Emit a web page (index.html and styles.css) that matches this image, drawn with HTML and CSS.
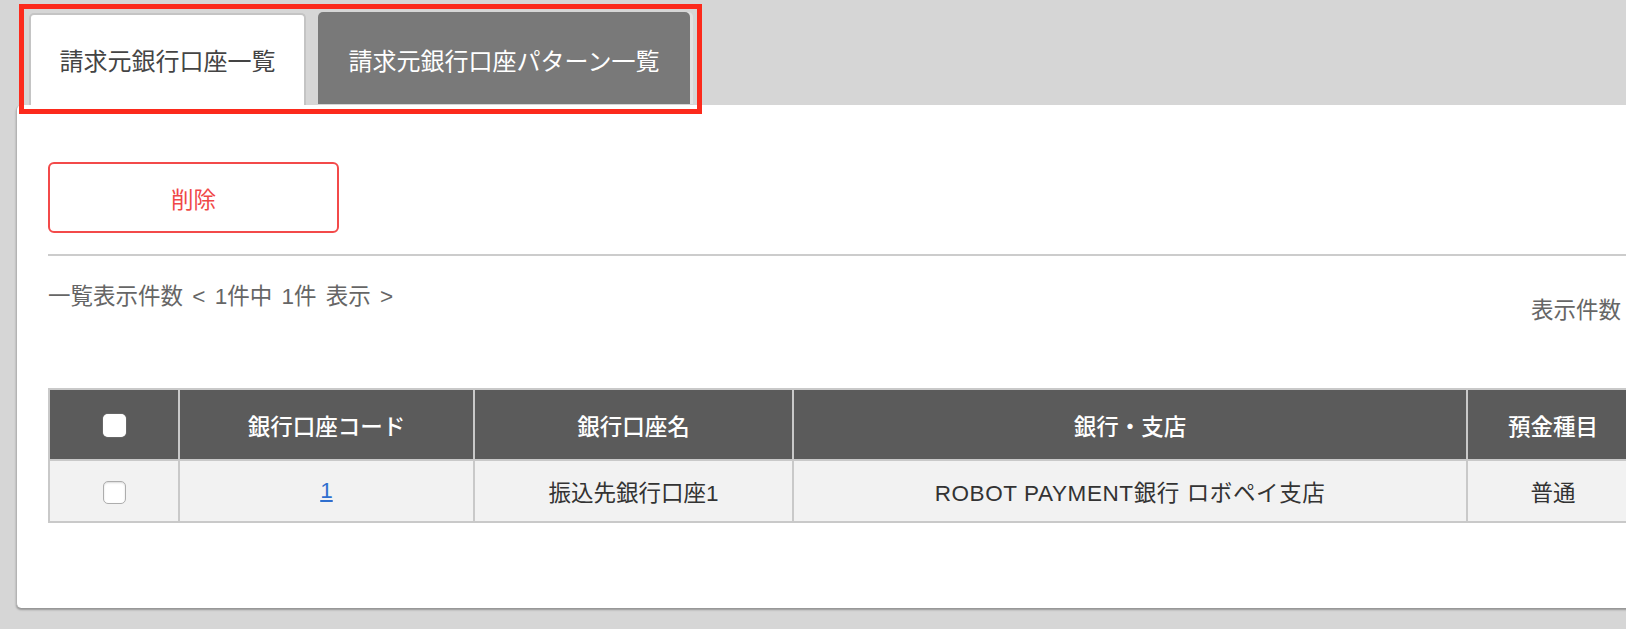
FILE: index.html
```html
<!DOCTYPE html>
<html lang="ja">
<head>
<meta charset="utf-8">
<title>請求元銀行口座一覧</title>
<link rel="stylesheet" href="styles.css">
</head>
<body>
<div class="page">
  <div class="tabs">
    <div class="tab tab-active">請求元銀行口座一覧</div>
    <div class="tab tab-inactive">請求元銀行口座パターン一覧</div>
  </div>
  <div class="panel">
    <button class="btn-delete" type="button">削除</button>
    <div class="divider"></div>
    <div class="info-row">
      <div class="info-left">一覧表示件数 &lt; 1件中 1件 表示 &gt;</div>
      <div class="info-right">
        <span class="info-label">表示件数</span>
        <span class="select-box">50件</span>
      </div>
    </div>
    <table class="list">
      <colgroup>
        <col class="c-check">
        <col class="c-code">
        <col class="c-name">
        <col class="c-bank">
        <col class="c-type">
        <col class="c-num">
      </colgroup>
      <thead>
        <tr>
          <th><span class="cb cb-head"></span></th>
          <th>銀行口座コード</th>
          <th>銀行口座名</th>
          <th>銀行・支店</th>
          <th>預金種目</th>
          <th>口座番号</th>
        </tr>
      </thead>
      <tbody>
        <tr>
          <td><span class="cb cb-body"></span></td>
          <td><a class="code-link" href="#">1</a></td>
          <td>振込先銀行口座1</td>
          <td class="bank-cell">ROBOT PAYMENT銀行 ロボペイ支店</td>
          <td>普通</td>
          <td>1234567</td>
        </tr>
      </tbody>
    </table>
  </div>
</div>
<div class="highlight"></div>
</body>
</html>
```

FILE: styles.css
```css
html, body {
  margin: 0;
  height: 100%;
  overflow: hidden;
}

body {
  background: #d6d6d6;
  font-family: "Liberation Sans", "Noto Sans CJK JP", sans-serif;
  font-size: 22.5px;
  color: #333;
  position: relative;
}

.page {
  padding: 12px 0 0 16px;
  width: 1900px;
}

.tabs {
  display: flex;
  align-items: flex-end;
  gap: 12px;
  padding-left: 13px;
  height: 93px;
}

.tab {
  box-sizing: border-box;
  height: 92px;
  display: flex;
  align-items: center;
  justify-content: center;
  font-size: 24px;
  border-radius: 5px 5px 0 0;
  font-family: "Noto Sans CJK JP", sans-serif;
}

.tab-active {
  width: 277px;
  background: #fff;
  color: #444;
  border: 2px solid #c4c4c4;
  border-bottom: none;
  padding-bottom: 2px;
}

.tab-inactive {
  width: 372px;
  background: #797979;
  color: #fff;
  margin-bottom: 1px;
  box-shadow: 3px 0 0 #e2e2e2;
  padding-top: 2px;
}

.panel {
  background: #fff;
  border-left: 1px solid #b4b4b4;
  border-radius: 5px 0 0 5px;
  box-shadow: 0 2px 2px rgba(0, 0, 0, 0.3);
  padding: 57px 31px 85px;
}

.btn-delete {
  display: flex;
  align-items: center;
  justify-content: center;
  box-sizing: border-box;
  width: 291px;
  height: 71px;
  border: 2px solid #f34a4a;
  border-radius: 6px;
  background: #fff;
  color: #f04848;
  font-family: "Noto Sans CJK JP", sans-serif;
  font-size: 22.5px;
  padding: 0;
}

.divider {
  margin-top: 21px;
  height: 2px;
  background: #cccccc;
}

.info-row {
  display: flex;
  justify-content: space-between;
  align-items: flex-start;
  margin-top: 24px;
}

.info-left {
  line-height: 33px;
  color: #666;
  word-spacing: 3px;
}

.info-right {
  display: flex;
  align-items: center;
  gap: 12px;
  margin-top: 8px;
  height: 44px;
  color: #666;
}

.info-label {
  line-height: 33px;
}

.select-box {
  box-sizing: border-box;
  width: 252px;
  height: 44px;
  border: 1px solid #bbb;
  border-radius: 4px;
  padding: 0 12px;
  display: flex;
  align-items: center;
}

.list {
  margin-top: 56px;
  width: 1837px;
  border-collapse: collapse;
  table-layout: fixed;
  border: 2px solid #c9c9c9;
}

.c-check { width: 130px; }
.c-code { width: 295px; }
.c-name { width: 319px; }
.c-bank { width: 674px; }
.c-type { width: 172px; }

.list th,
.list td {
  border: 2px solid #c9c9c9;
  text-align: center;
  padding: 0;
  white-space: nowrap;
}

.list th {
  background: #5b5b5b;
  color: #fff;
  font-weight: 500;
  height: 69px;
}

.list td {
  background: #f2f2f2;
  color: #333;
  height: 60px;
}

.bank-cell {
  letter-spacing: 0.6px;
}

.cb {
  display: inline-block;
  box-sizing: border-box;
  width: 23px;
  height: 23px;
  border-radius: 5px;
  vertical-align: middle;
}

.cb-head {
  background: #fff;
  box-shadow: 0 0 1px rgba(255, 255, 255, 0.8);
}

.cb-body {
  background: #fff;
  border: 1px solid #adadad;
  box-shadow: inset 0 1px 2px rgba(0, 0, 0, 0.15);
}

.code-link {
  color: #2f6fcf;
  text-decoration: underline;
}

.highlight {
  position: absolute;
  left: 19px;
  top: 4px;
  width: 683px;
  height: 110px;
  box-sizing: border-box;
  border: 5px solid #fc2a1c;
  pointer-events: none;
}
```
